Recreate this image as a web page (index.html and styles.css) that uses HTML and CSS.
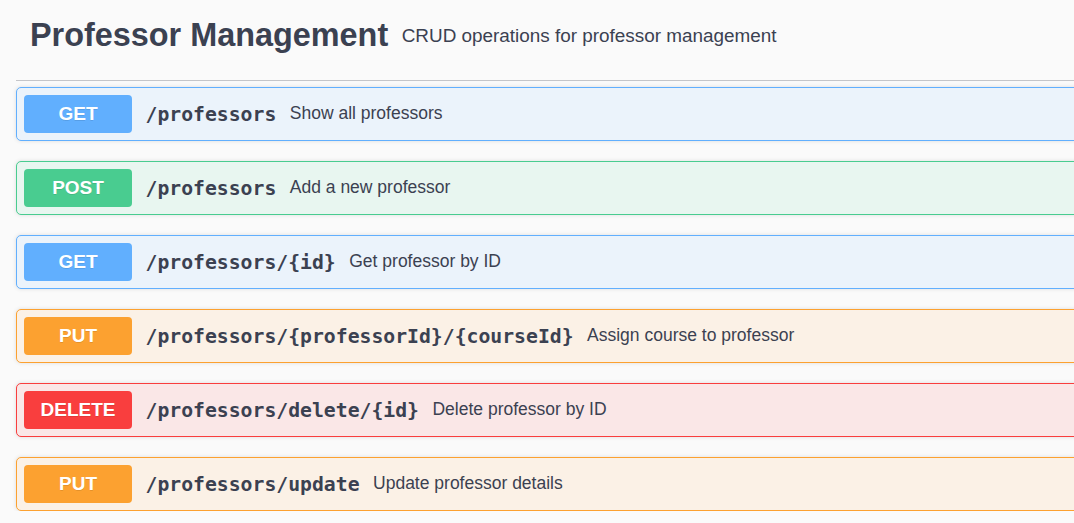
FILE: index.html
```html
<!DOCTYPE html>
<html>
<head>
<meta charset="utf-8">
<title>Professor Management</title>
<link rel="stylesheet" href="styles.css">
</head>
<body>
<div class="section">
  <h3 class="tag">
    <span class="tag-title">Professor Management</span>
    <small class="tag-desc">CRUD operations for professor management</small>
  </h3>
  <div class="ops">
    <div class="op op-get">
      <span class="method">GET</span>
      <span class="path">/professors</span>
      <span class="desc">Show all professors</span>
    </div>
    <div class="op op-post">
      <span class="method">POST</span>
      <span class="path">/professors</span>
      <span class="desc">Add a new professor</span>
    </div>
    <div class="op op-get">
      <span class="method">GET</span>
      <span class="path">/professors/{id}</span>
      <span class="desc">Get professor by ID</span>
    </div>
    <div class="op op-put">
      <span class="method">PUT</span>
      <span class="path">/professors/{professorId}/{courseId}</span>
      <span class="desc">Assign course to professor</span>
    </div>
    <div class="op op-delete">
      <span class="method">DELETE</span>
      <span class="path">/professors/delete/{id}</span>
      <span class="desc">Delete professor by ID</span>
    </div>
    <div class="op op-put">
      <span class="method">PUT</span>
      <span class="path">/professors/update</span>
      <span class="desc">Update professor details</span>
    </div>
  </div>
</div>
</body>
</html>
```

FILE: styles.css
```css
html, body {
  margin: 0;
  padding: 0;
  background: #fafafa;
  overflow: hidden;
}
body {
  font-family: "Liberation Sans", Arial, sans-serif;
  color: #3b4151;
}
.section {
  margin-left: 16px;
  margin-right: -40px;
}
.tag {
  display: flex;
  align-items: center;
  margin: 0;
  padding: 17px 0 26px 14px;
  border-bottom: 1px solid #c4c5c9;
  font-weight: normal;
}
.tag-title {
  font-size: 32.4px;
  font-weight: bold;
  line-height: 37px;
  color: #3b4151;
}
.tag-desc {
  font-size: 18.9px;
  padding: 0 13.5px;
  color: #3b4151;
}
.ops {
  padding-top: 6px;
  display: flex;
  flex-direction: column;
  gap: 20px;
}
.op {
  display: flex;
  align-items: center;
  padding: 7px;
  border: 1px solid;
  border-radius: 5px;
  box-shadow: 0 0 4px rgba(0, 0, 0, 0.12);
}
.method {
  min-width: 108px;
  height: 38px;
  display: flex;
  align-items: center;
  justify-content: center;
  border-radius: 4px;
  color: #fff;
  font-size: 19px;
  font-weight: bold;
  text-shadow: 0 1px 0 rgba(0, 0, 0, 0.1);
}
.path {
  font-family: "DejaVu Sans Mono", monospace;
  font-weight: bold;
  font-size: 19.75px;
  padding: 0 13.5px;
  color: #3b4151;
}
.desc {
  font-size: 17.5px;
  line-height: 20px;
  margin-top: -2px;
  color: #3b4151;
}
.op-get { border-color: #61affe; background: #ebf3fb; }
.op-get .method { background: #61affe; }
.op-post { border-color: #49cc90; background: #e8f6f0; }
.op-post .method { background: #49cc90; }
.op-put { border-color: #fca130; background: #fbf1e6; }
.op-put .method { background: #fca130; }
.op-delete { border-color: #f93e3e; background: #fae7e7; }
.op-delete .method { background: #f93e3e; }
```
